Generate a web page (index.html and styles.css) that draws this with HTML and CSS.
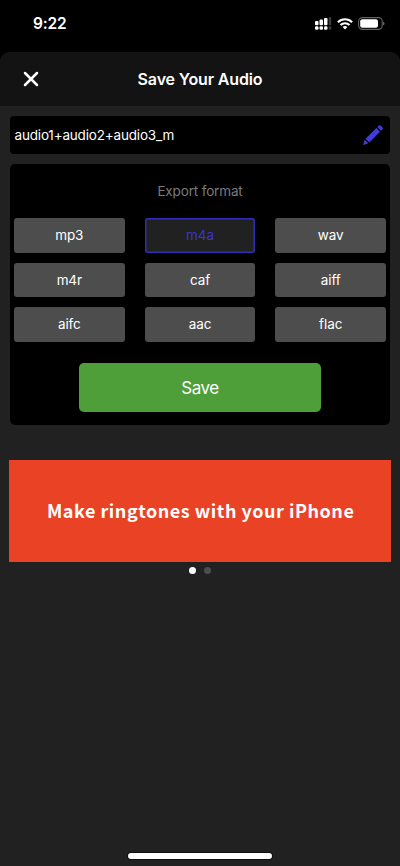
FILE: index.html
```html
<!DOCTYPE html>
<html lang="en">
<head>
<meta charset="utf-8">
<title>Save Your Audio</title>
<link rel="stylesheet" href="styles.css">
</head>
<body>
<div class="status">
  <span class="time">9:22</span>
  <div class="indicators">
    <svg class="signal" width="17" height="14" viewBox="0 0 17 14">
      <g fill="#fff"><rect x="0" y="4" width="3.5" height="4.2" rx="1"/><rect x="4.5" y="2.5" width="3.5" height="5.7" rx="1"/><rect x="9" y="1" width="3.5" height="7.2" rx="1"/><rect x="0" y="9.2" width="3.5" height="3.6" rx="1.2"/><rect x="4.5" y="9.2" width="3.5" height="3.6" rx="1.2"/><rect x="9" y="9.2" width="3.5" height="3.6" rx="1.2"/></g>
      <g fill="#3a3a3a"><rect x="13.7" y="0" width="2.5" height="8.2" rx="1"/><rect x="13.7" y="9.2" width="2.5" height="3.6" rx="1"/></g>
    </svg>
    <svg class="wifi" width="16" height="12" viewBox="0 0 16 12">
      <g fill="none" stroke="#fff" stroke-width="2.1"><path d="M.9 4.2a10.2 10.2 0 0 1 14.2 0"/><path d="M3.5 7.1a6.4 6.4 0 0 1 9 0"/></g>
      <path fill="#fff" d="M5.6 9.1a3.6 3.6 0 0 1 4.8 0L8 11.6z"/>
    </svg>
    <svg class="battery" width="27" height="13" viewBox="0 0 27 13">
      <rect x=".6" y=".6" width="23.6" height="11.8" rx="3.8" fill="none" stroke="#626262" stroke-width="1.1"/>
      <rect x="2.2" y="2.2" width="17.8" height="8.6" rx="2.1" fill="#fff"/>
      <path d="M25.2 4.4a2.4 2.4 0 0 1 0 4.2z" fill="#777"/>
    </svg>
  </div>
</div>
<main class="sheet">
  <header class="header">
    <svg class="close" width="16" height="16" viewBox="0 0 16 16"><path d="M2 2l12 12M14 2L2 14" stroke="#fff" stroke-width="2.5" stroke-linecap="round"/></svg>
    <h1 class="title">Save Your Audio</h1>
  </header>
  <div class="content">
    <div class="name">
      <span class="filename">audio1+audio2+audio3_m</span>
      <svg class="pencil" width="20" height="20" viewBox="0 0 20 20" fill="#403ddb"><path d="M14.4 2.1l1.5-1.5q.8-.7 1.6 0l2 2q.7.8 0 1.6L18 5.7z"/><path d="M13.3 3.1L17 6.8 6.3 17.4 2.6 13.7z"/><path d="M1.8 14.7l3.5 3.5L.6 19.9q-.5 0-.4-.5z"/></svg>
    </div>
    <section class="panel">
      <h2 class="label">Export format</h2>
      <div class="formats">
        <button class="format">mp3</button>
        <button class="format selected">m4a</button>
        <button class="format">wav</button>
        <button class="format">m4r</button>
        <button class="format">caf</button>
        <button class="format">aiff</button>
        <button class="format">aifc</button>
        <button class="format">aac</button>
        <button class="format">flac</button>
      </div>
      <button class="save">Save</button>
    </section>
    <div class="banner"><span class="banner-text">Make ringtones with your iPhone</span></div>
    <div class="dots"><i class="dot active"></i><i class="dot"></i></div>
  </div>
  <div class="home"></div>
</main>
</body>
</html>
```
FILE: styles.css
```css
* { box-sizing: border-box; }
body {
  margin: 0;
  height: 866px;
  display: flex;
  flex-direction: column;
  overflow: hidden;
  background: #000;
  color: #fff;
  font-family: Inter, "Liberation Sans", sans-serif;
}
.status {
  height: 52px;
  flex: none;
  display: flex;
  justify-content: space-between;
  padding: 0 15px 0 33px;
}
.time {
  margin-top: 14px;
  font-size: 15.5px;
  line-height: 20px;
  font-weight: 600;
  letter-spacing: -0.2px;
}
.indicators { display: flex; align-items: flex-start; }
.signal { margin: 17px 5px 0 0; }
.wifi { margin: 18px 5px 0 0; }
.battery { margin-top: 17px; }
.sheet {
  flex: 1;
  display: flex;
  flex-direction: column;
  background: #212121;
  border-radius: 10px 10px 0 0;
  overflow: hidden;
}
.header {
  height: 54px;
  flex: none;
  display: grid;
  grid-template-columns: 60px 1fr 60px;
  align-items: center;
  background: #131313;
}
.close { margin-left: 23px; }
.title {
  margin: 0;
  text-align: center;
  font-size: 16px;
  line-height: 20px;
  font-weight: 600;
  letter-spacing: -0.15px;
}
.content { flex: 1; padding: 10px 10px 0; }
.name {
  height: 38px;
  display: flex;
  align-items: center;
  justify-content: space-between;
  padding: 0 7px 0 4.5px;
  border-radius: 4px;
  background: #000;
}
.filename { font-size: 13.5px; letter-spacing: -0.18px; }
.panel {
  height: 261px;
  margin-top: 10px;
  padding: 18px 4px 0;
  border-radius: 5px;
  background: #000;
}
.label {
  margin: 0 0 18px;
  text-align: center;
  font-size: 13.5px;
  line-height: 18px;
  font-weight: 400;
  letter-spacing: -0.15px;
  color: #7b7b7b;
}
.formats {
  display: grid;
  grid-template-columns: repeat(3, 110.6px);
  grid-auto-rows: 34.5px;
  justify-content: space-between;
  row-gap: 10px;
}
.format, .save {
  margin: 0;
  padding: 0;
  border: 0;
  font: 400 13.5px/18px Inter, "Liberation Sans", sans-serif;
  letter-spacing: -0.1px;
  color: #fff;
}
.format { border-radius: 3px; background: #4d4d4d; }
.format.selected { background: #212121; box-shadow: inset 0 0 0 1.5px #302eb2; color: #3936cf; }
.save {
  display: block;
  width: 242px;
  height: 49px;
  margin: 21.5px auto 0;
  border-radius: 5px;
  background: #4e9e39;
  font-size: 17px;
  letter-spacing: -0.5px;
}
.banner {
  height: 102px;
  margin: 35px -1px 0 -.6px;
  padding: 0 0 3px 1px;
  display: flex;
  align-items: center;
  justify-content: center;
  background: #ea4225;
}
.banner-text {
  font: 700 18px/26px "Noto Sans CJK SC", "Noto Sans", sans-serif;
  letter-spacing: 0.52px;
  white-space: nowrap;
}
.dots { display: flex; justify-content: center; gap: 8.5px; margin-top: 4.5px; }
.dot { width: 7px; height: 7px; border-radius: 50%; background: #4d4d4d; }
.dot.active { background: #fff; }
.home {
  width: 144px;
  height: 6px;
  flex: none;
  margin: 0 auto 7px;
  border-radius: 3px;
  background: #fff;
  box-shadow: 0 0 0 1px #111;
}
```
